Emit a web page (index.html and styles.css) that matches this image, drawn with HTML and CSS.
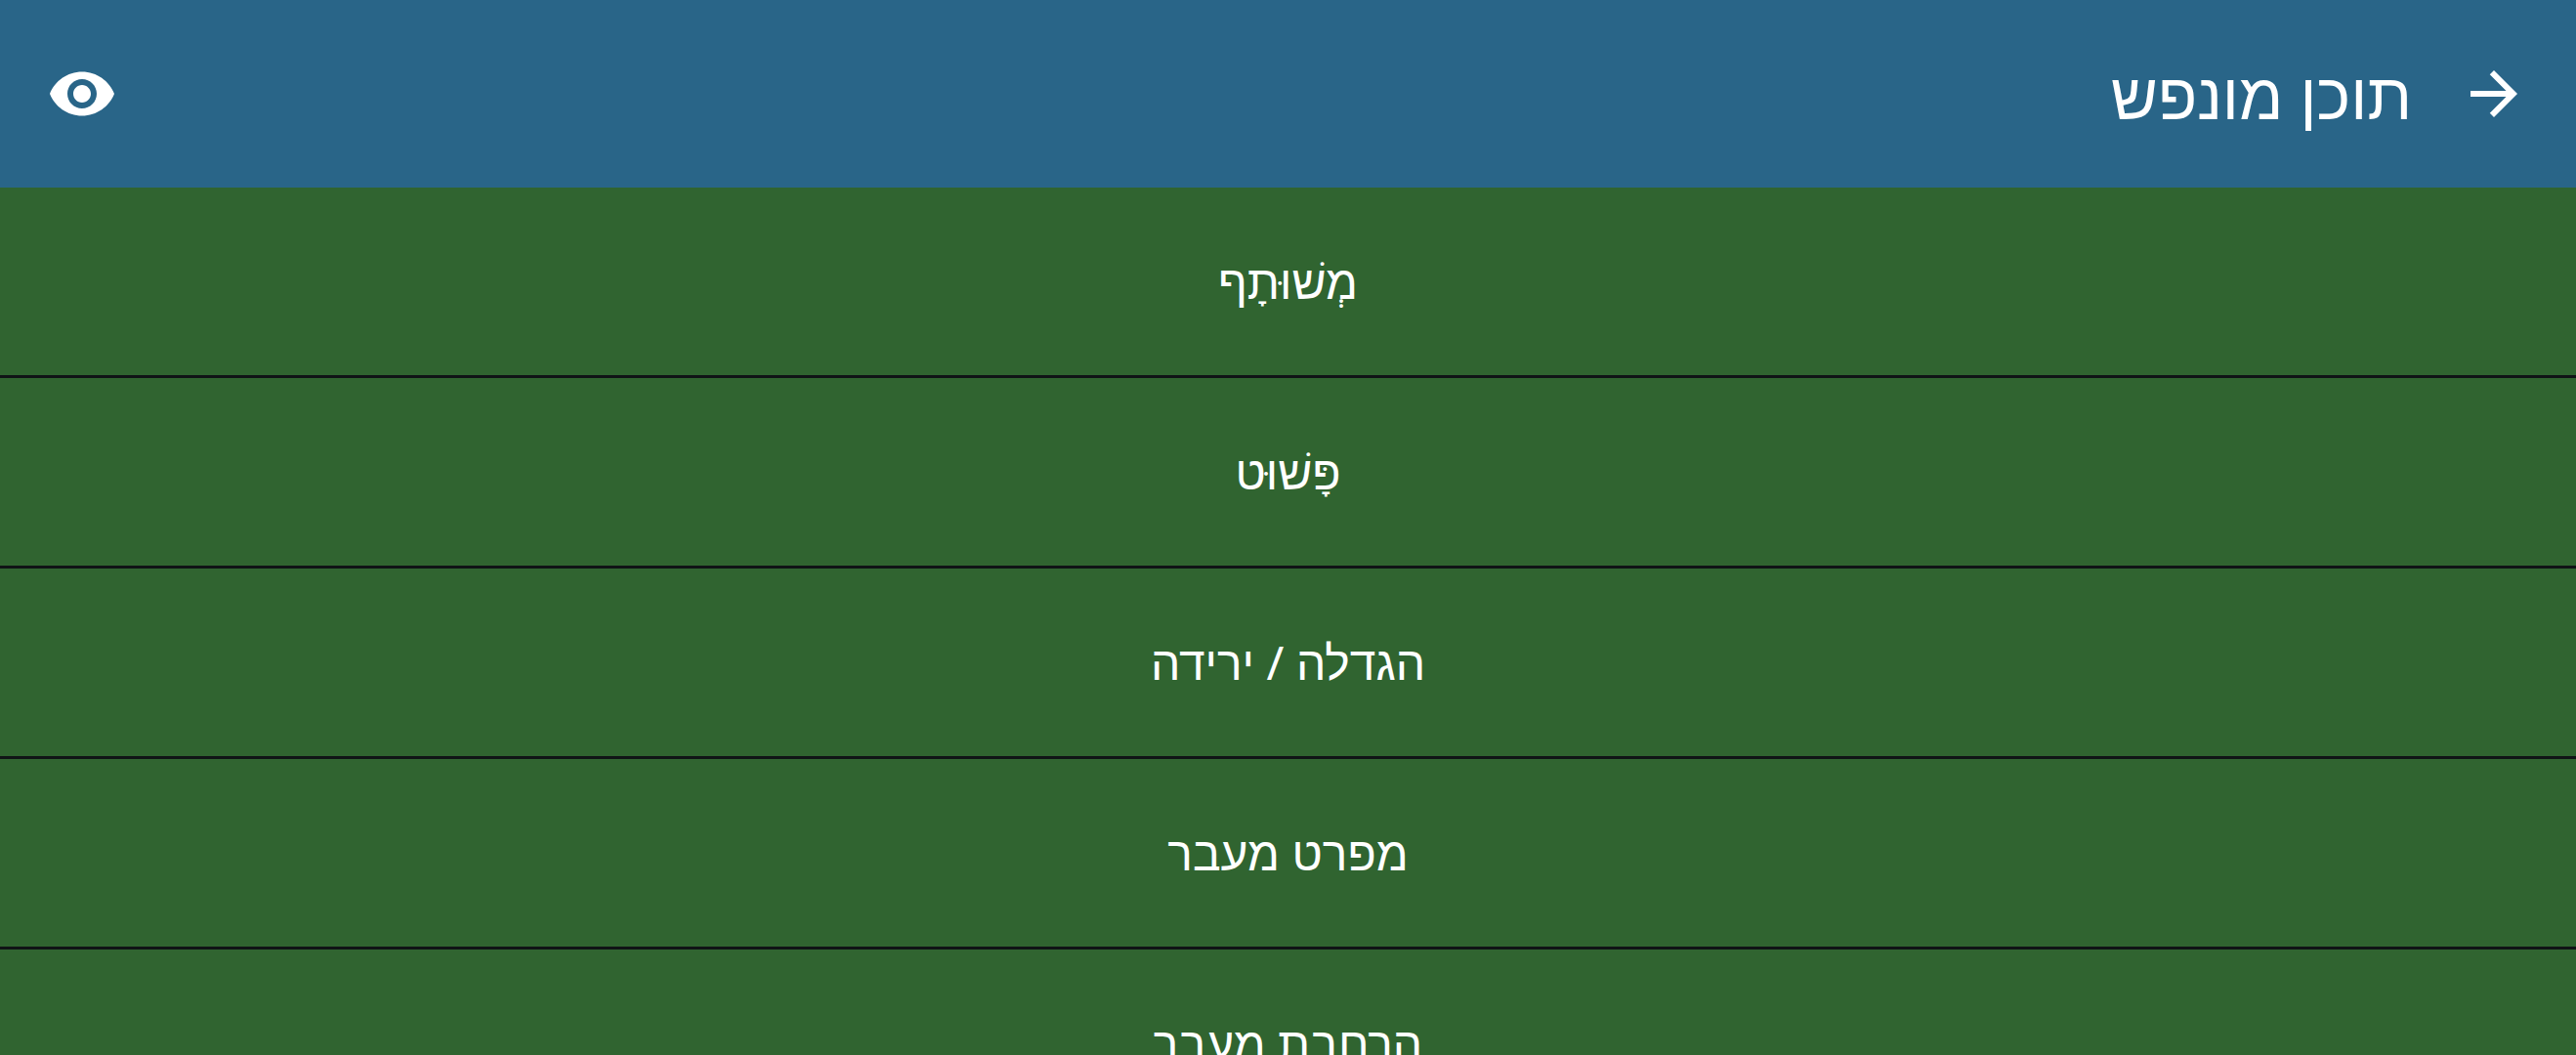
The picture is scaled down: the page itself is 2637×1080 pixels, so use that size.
FILE: index.html
```html
<!DOCTYPE html>
<html lang="he" dir="rtl">
<head>
<meta charset="utf-8">
<title>תוכן מונפש</title>
<link rel="stylesheet" href="styles.css">
</head>
<body>
<header class="app-bar">
  <button class="icon-button" type="button" aria-label="חזרה"><svg class="icon" viewBox="0 0 24 24"><path d="M12 4l-1.41 1.41L16.17 11H4v2h12.17l-5.58 5.59L12 20l8-8z"/></svg></button>
  <h1 class="title">תוכן מונפש</h1>
  <button class="icon-button" type="button" aria-label="תצוגה"><svg class="icon" viewBox="0 0 24 24"><path d="M12 4.5C7 4.5 2.73 7.61 1 12c1.73 4.39 6 7.5 11 7.5s9.27-3.11 11-7.5c-1.73-4.39-6-7.5-11-7.5zM12 17c-2.76 0-5-2.24-5-5s2.24-5 5-5 5 2.24 5 5-2.24 5-5 5zm0-8c-1.66 0-3 1.34-3 3s1.34 3 3 3 3-1.34 3-3-1.34-3-3-3z"/></svg></button>
</header>
<main>
  <ul class="list">
    <li class="item"><a class="link" href="#common">מְשׁוּתָף</a></li>
    <li class="item"><a class="link" href="#simple">פָּשׁוּט</a></li>
    <li class="item"><a class="link" href="#size">הגדלה / ירידה</a></li>
    <li class="item"><a class="link" href="#spec">מפרט מעבר</a></li>
    <li class="item"><a class="link" href="#extension">הרחבת מעבר</a></li>
  </ul>
</main>
</body>
</html>
```
FILE: styles.css
```css
* { box-sizing: border-box; }
body {
  margin: 0;
  height: 100vh;
  display: flex;
  flex-direction: column;
  overflow: hidden;
  background: #306430;
  color: #fff;
  font-family: "Noto Sans", "Liberation Sans", sans-serif;
}
.app-bar {
  display: flex;
  align-items: center;
  flex: none;
  height: 192px;
  padding: 0 48px;
  background: #296588;
}
.icon-button {
  display: flex;
  padding: 0;
  border: 0;
  background: none;
  color: inherit;
}
.icon { width: 72px; height: 72px; fill: currentColor; }
.title {
  flex: 1;
  margin: 0 48px;
  font-size: 66px;
  font-weight: 400;
  line-height: 84px;
}
main { flex: 1; min-height: 0; overflow: hidden; }
.list { margin: 0; padding: 0; list-style: none; }
.item { border-bottom: 3px solid #101416; }
.link {
  display: flex;
  align-items: center;
  justify-content: center;
  height: 192px;
  color: inherit;
  font-size: 48px;
  line-height: 72px;
  text-decoration: none;
}
```
